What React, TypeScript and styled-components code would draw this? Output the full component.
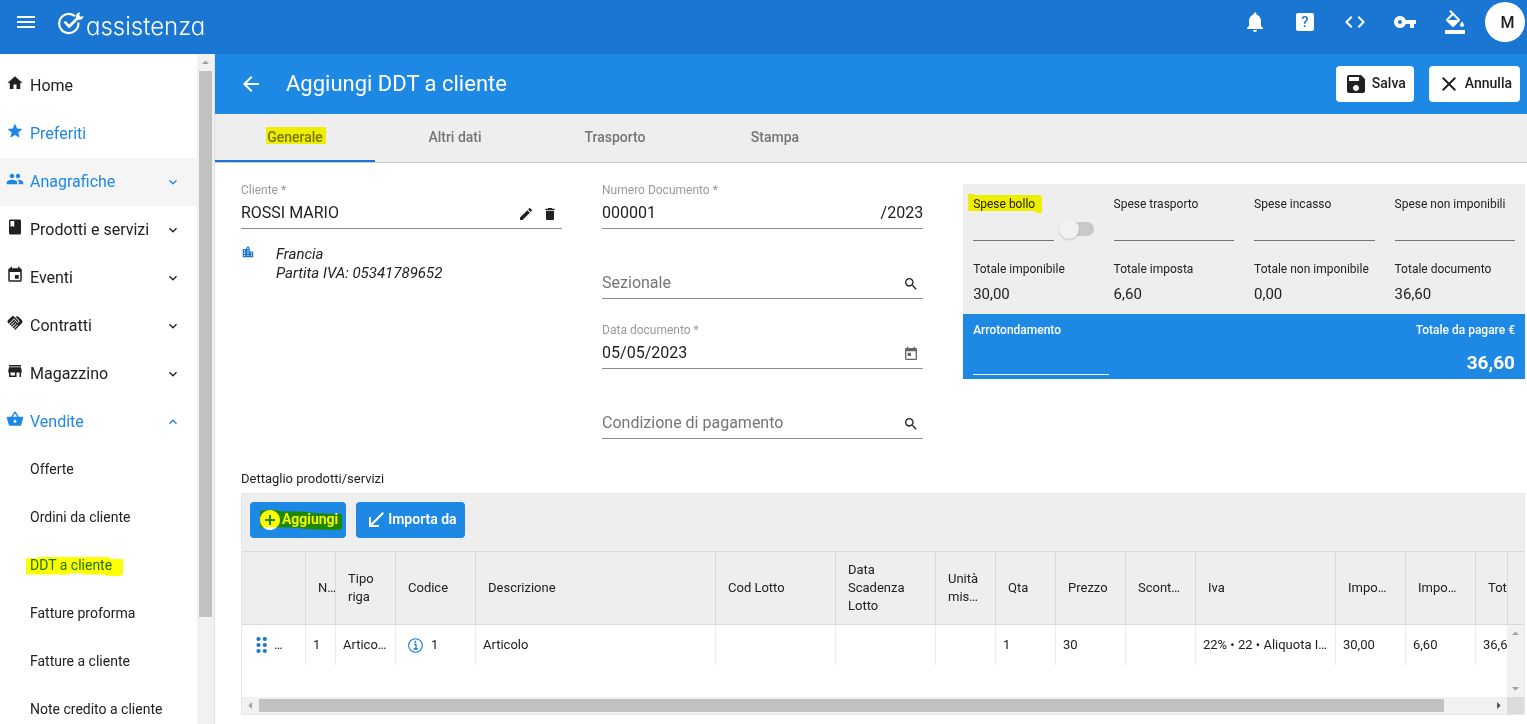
import React from "react";
import styled, { createGlobalStyle, css } from "styled-components";
import {
  MdAddCircle, MdArrowBack, MdArrowDropDown, MdArrowDropUp, MdArrowLeft, MdArrowRight,
  MdCallReceived, MdClass, MdClose, MdCode, MdDelete, MdEdit, MdEvent, MdFormatColorFill,
  MdHandshake, MdHome, MdKeyboardArrowDown, MdKeyboardArrowUp, MdLocationCity,
  MdMenu, MdNotifications, MdPeople, MdSave, MdSearch, MdShoppingBasket, MdStar, MdStore,
  MdToday, MdVpnKey,
} from "react-icons/md";

const color = {
  primary: "#1976d2",
  accent: "#1e88e5",
  panel: "#eeeeee",
  text: "#212121",
  muted: "#757575",
  line: "#d9d9d9",
  track: "#f1f1f1",
  thumb: "#c1c1c1",
};

const GlobalStyle = createGlobalStyle`
  *, *::before, *::after { box-sizing: border-box; }
  body {
    margin: 0;
    overflow: hidden;
    background: #fff;
    color: ${color.text};
    font-family: Roboto, "Liberation Sans", sans-serif;
    font-size: 13px;
  }
  button, input { font: inherit; color: inherit; }
  svg { display: block; flex: none; }
`;

const Page = styled.div`
  display: flex;
  flex-direction: column;
  height: 100vh;
`;

/* ---------- Top bar ---------- */

const TopBar = styled.header`
  display: flex;
  align-items: center;
  flex: none;
  height: 54px;
  padding: 0 2px 10px 14px;
  background: ${color.primary};
  color: #fff;
`;

const BareButton = styled.button`
  display: flex;
  align-items: center;
  justify-content: center;
  padding: 0;
  border: 0;
  background: none;
  cursor: pointer;
`;

const TopAction = styled(BareButton)`
  width: 50px;
  height: 44px;
`;

const Logo = styled.a`
  display: flex;
  align-items: center;
  gap: 1px;
  margin: 4px auto 0 20px;
  color: #fff;
  text-decoration: none;
`;

const LogoText = styled.span`
  padding-top: 6px;
  font-family: Inter, Lato, sans-serif;
  font-size: 24px;
  font-weight: 300;
  line-height: 26px;
  font-feature-settings: "cv11";
`;

const HelpBox = styled.span`
  width: 18px;
  border-radius: 2px;
  background: #fff;
  color: ${color.primary};
  font-size: 15px;
  font-weight: 500;
  line-height: 18px;
  text-align: center;
`;

const Avatar = styled(BareButton)`
  width: 40px;
  height: 40px;
  margin-left: 5px;
  padding-left: 5px;
  border-radius: 50%;
  background: #fff;
  color: ${color.text};
  font-size: 16px;
  font-weight: 500;
`;

/* ---------- Sidebar ---------- */

const Body = styled.div`
  display: flex;
  flex: 1;
  min-height: 0;
`;

const Sidebar = styled.aside`
  display: flex;
  flex: none;
  width: 215px;
  border-right: 1px solid #e0e0e0;
  overflow: hidden;
`;

const Nav = styled.nav`
  flex: 1;
  padding-top: 8px;
  overflow: hidden;
`;

const NavItem = styled.a<{ $tone?: "active" | "hover" }>`
  display: flex;
  align-items: center;
  gap: 6px;
  height: 48px;
  padding: 0 16px 2px 6px;
  background: ${(p) => (p.$tone === "hover" ? "#f5f5f5" : "transparent")};
  color: ${(p) => (p.$tone ? color.accent : color.text)};
  font-size: 16px;
  text-decoration: none;

  > svg:first-child { margin-bottom: 4px; }
  > svg:last-child:not(:first-child) { margin: 2px 0 0 auto; }
`;

const SubItem = styled.a`
  display: flex;
  align-items: center;
  height: 48px;
  padding: 0 16px 2px 30px;
  color: ${color.text};
  font-size: 14px;
  text-decoration: none;
`;

/* ---------- Drawn scrollbars ---------- */

const ScrollTrack = styled.div<{ $horizontal?: boolean }>`
  display: flex;
  flex-direction: ${(p) => (p.$horizontal ? "row" : "column")};
  align-items: center;
  flex: none;
  ${(p) => (p.$horizontal ? "height: 17px;" : "width: 17px;")}
  background: ${color.track};
  color: #a3a3a3;
`;

const ScrollRun = styled.div<{ $horizontal?: boolean }>`
  flex: 1;
  display: flex;
  flex-direction: ${(p) => (p.$horizontal ? "row" : "column")};
  align-items: center;
  align-self: stretch;
`;

const ScrollThumb = styled.div<{ $horizontal?: boolean; $share: string }>`
  background: ${color.thumb};
  ${(p) => (p.$horizontal ? css`height: 13px; width: ${p.$share};` : css`width: 13px; height: ${p.$share};`)}
`;

/* ---------- Highlighter strokes ---------- */

const Marked = styled.span`
  position: relative;
`;

const Stroke = styled.span<{ $inset: string; $shape?: string }>`
  position: absolute;
  inset: ${(p) => p.$inset};
  background: #ff0;
  mix-blend-mode: multiply;
  pointer-events: none;
  ${(p) => p.$shape && css`clip-path: polygon(${p.$shape});`}
`;

/* ---------- Main area ---------- */

const Main = styled.main`
  display: flex;
  flex-direction: column;
  flex: 1;
  min-width: 0;
`;

const TitleBar = styled.div`
  display: flex;
  align-items: center;
  flex: none;
  gap: 15px;
  height: 60px;
  padding: 0 7px 0 24px;
  background: ${color.accent};
  color: #fff;
`;

const Title = styled.h1`
  flex: 1;
  margin: 0 0 2px 8px;
  font-size: 22px;
  font-weight: 400;
`;

const ActionButton = styled.button<{ $filled?: boolean }>`
  position: relative;
  display: flex;
  align-items: center;
  gap: ${(p) => (p.$filled ? "0" : "4px")};
  height: 36px;
  padding: 0 8px;
  border: 0;
  border-radius: 4px;
  background: ${(p) => (p.$filled ? color.accent : "#fff")};
  color: ${(p) => (p.$filled ? "#fff" : color.text)};
  font-size: 14px;
  font-weight: ${(p) => (p.$filled ? 600 : 500)};
  cursor: pointer;

  > span { margin-bottom: 2px; }
`;

const Tabs = styled.div`
  display: flex;
  flex: none;
  height: 49px;
  border-bottom: 1px solid #cccccc;
  background: ${color.panel};
`;

const Tab = styled.button<{ $active?: boolean }>`
  width: 160px;
  padding: 0;
  border: 0;
  border-bottom: 2px solid ${(p) => (p.$active ? color.primary : "transparent")};
  background: none;
  color: ${color.muted};
  font-size: 14px;
  font-weight: 500;
`;

const Content = styled.div`
  display: flex;
  flex-direction: column;
  flex: 1;
  padding: 16px 2px 9px 26px;
`;

const FormGrid = styled.div`
  display: grid;
  grid-template-columns: 4fr 4fr 7fr;
  column-gap: 40px;
`;

const FieldColumn = styled.div`
  display: flex;
  flex-direction: column;
  gap: 20px;
  min-width: 0;
`;

const FieldBox = styled.div`
  display: flex;
  flex-direction: column;
  height: 50px;
  border-bottom: 1px solid #8c8c8c;
`;

const FieldLabel = styled.label`
  height: 22px;
  color: #9a9a9a;
  font-size: 12px;
  line-height: 22px;
`;

const FieldRow = styled.div`
  display: flex;
  align-items: center;
  gap: 8px;
  height: 22px;
  color: ${color.text};
  font-size: 16px;
`;

const FieldInput = styled.input`
  flex: 1;
  min-width: 0;
  padding: 2px 0 0;
  border: 0;
  outline: 0;
  background: none;
  font-size: 16px;
  line-height: 22px;

  &::placeholder { color: ${color.muted}; opacity: 1; }
`;

const FieldTools = styled.span`
  display: flex;
  gap: 8px;
  padding: 3px 4px 0 0;
`;

const CustomerInfo = styled.div`
  display: flex;
  gap: 21px;
  margin-top: -4px;
  font-size: 15px;
  font-style: italic;
  line-height: 19px;

  svg { color: ${color.primary}; }
`;

/* ---------- Totals ---------- */

const Totals = styled.section`
  align-self: start;
  margin-top: 5px;
  background: ${color.panel};
`;

const TotalsGrid = styled.div`
  display: grid;
  grid-template-columns: repeat(4, 1fr);
  grid-auto-rows: 65px;
`;

const TotalCell = styled.div`
  display: flex;
  flex-direction: column;
  padding: 10px 10px 8px;
  line-height: 20px;
  font-size: 12px;
`;

const TotalValue = styled.output`
  padding-top: 3px;
  font-size: 15px;
  line-height: 24px;
`;

const AmountRow = styled.div`
  display: flex;
  align-items: flex-start;
  gap: 6px;
`;

const AmountInput = styled.input<{ $light?: boolean }>`
  flex: none;
  width: 100%;
  min-width: 0;
  height: ${(p) => (p.$light ? "35px" : "27px")};
  padding: 0;
  border: 0;
  border-bottom: 1px solid ${(p) => (p.$light ? "#fff" : "#757575")};
  outline: 0;
  background: none;

  ${AmountRow} & { flex: 1; }
`;

const Switch = styled.input`
  appearance: none;
  position: relative;
  flex: none;
  width: 34px;
  height: 14px;
  margin: 8px 0 0;
  border-radius: 7px;
  background: #c9c9c9;

  &::before {
    content: "";
    position: absolute;
    top: -3px;
    left: -1px;
    width: 20px;
    height: 20px;
    border-radius: 50%;
    background: #f1f1f1;
    box-shadow: 0 1px 2px rgba(0, 0, 0, 0.2);
  }
`;

const PayRow = styled.div`
  display: flex;
  justify-content: space-between;
  height: 65px;
  padding: 6px 10px 4px;
  background: ${color.accent};
  color: #fff;
  font-size: 12px;
  font-weight: 500;
  line-height: 20px;
`;

const PayCell = styled.div<{ $end?: boolean }>`
  display: flex;
  flex-direction: column;
  width: 25%;
  text-align: ${(p) => (p.$end ? "right" : "left")};
`;

const PayTotal = styled.output`
  padding-top: 10px;
  font-size: 19px;
  font-weight: 700;
  line-height: 26px;
`;

/* ---------- Detail grid ---------- */

const SectionLabel = styled.h2`
  margin: 29px 0 3px;
  font-size: 13px;
  font-weight: 400;
  line-height: 22px;
`;

const Grid = styled.section`
  display: flex;
  flex-direction: column;
  flex: 1;
  min-height: 0;
  border: 1px solid #e6e6e6;
`;

const Toolbar = styled.div`
  display: flex;
  gap: 10px;
  flex: none;
  height: 57px;
  padding: 8px;
  background: ${color.panel};
`;

const GridBody = styled.div`
  display: flex;
  flex: 1;
  min-height: 0;
`;

const GridView = styled.div`
  flex: 1;
  min-width: 0;
  overflow: hidden;
`;

const Gutter = styled.div`
  display: flex;
  flex-direction: column;
  width: 17px;
`;

const GutterHead = styled.div`
  flex: none;
  height: 74px;
  border: solid ${color.line};
  border-width: 1px 0 1px 1px;
  background: ${color.panel};
`;

const GutterTrack = styled(ScrollTrack)`
  flex: 1;
  justify-content: space-between;
`;

const Table = styled.table`
  width: 1313px;
  table-layout: fixed;
  border-spacing: 0;
  font-size: 13px;
  line-height: 18px;
`;

const HeadCell = styled.th`
  height: 74px;
  padding: 0 0 0 12px;
  border: solid ${color.line};
  border-width: 1px 0 1px 1px;
  background: ${color.panel};
  font-weight: 400;
  text-align: left;
  white-space: pre-line;
  overflow: hidden;

  &:first-child { border-left: 0; }
`;

const Cell = styled.td`
  height: 40px;
  padding: 0 0 0 7px;
  border-left: 1px solid #ebebeb;
  white-space: nowrap;
  overflow: hidden;

  &:first-child { border-left: 0; padding-left: 14px; }
`;

const IconCell = styled.span<{ $indent?: boolean }>`
  display: flex;
  align-items: center;
  gap: ${(p) => (p.$indent ? "8px" : "6px")};
  padding-left: ${(p) => (p.$indent ? "5px" : "0")};

  svg { color: ${color.primary}; }
`;

const Corner = styled.div`
  width: 17px;
  height: 17px;
  background: #dcdcdc;
`;

const DarkArrow = styled.span`
  color: #505050;
`;

/* ---------- Data ---------- */

const menu = [
  { label: "Home", icon: MdHome },
  { label: "Preferiti", icon: MdStar, tone: "active" as const },
  { label: "Anagrafiche", icon: MdPeople, tone: "hover" as const, arrow: "down" },
  { label: "Prodotti e servizi", icon: MdClass, arrow: "down" },
  { label: "Eventi", icon: MdEvent, arrow: "down" },
  { label: "Contratti", icon: MdHandshake, arrow: "down" },
  { label: "Magazzino", icon: MdStore, arrow: "down" },
  { label: "Vendite", icon: MdShoppingBasket, tone: "active" as const, arrow: "up" },
];

const subMenu = ["Offerte", "Ordini da cliente", "DDT a cliente", "Fatture proforma", "Fatture a cliente", "Note credito a cliente"];

const InfoIcon = () => (
  <svg width="15" height="15" viewBox="0 0 15 15" fill="none" stroke="currentColor" aria-hidden="true">
    <circle cx="7.5" cy="7.5" r="6.8" strokeWidth="1.1" />
    <path d="M6 6.4h2v4.6M5.6 11h4.2" strokeWidth="1.3" />
    <circle cx="7.4" cy="4" r="1" fill="currentColor" stroke="none" />
  </svg>
);

const InfoCell = ({ text }: { text: string }) => (
  <IconCell $indent><InfoIcon /><span>{text}</span></IconCell>
);

const DragDots = () => (
  <svg width="12" height="18" viewBox="0 0 12 18" fill="currentColor" aria-hidden="true">
    {[3, 9, 15].map((y) => (
      <g key={y}>
        <circle cx="2.5" cy={y} r="2.1" />
        <circle cx="8.8" cy={y} r="2.1" />
      </g>
    ))}
  </svg>
);

const columns: { title: string; width: number; value?: React.ReactNode }[] = [
  { title: "", width: 63, value: <IconCell><DragDots /><span>…</span></IconCell> },
  { title: "N…", width: 30, value: "1" },
  { title: "Tipo\nriga", width: 60, value: "Artico…" },
  { title: "Codice", width: 80, value: <InfoCell text="1" /> },
  { title: "Descrizione", width: 240, value: "Articolo" },
  { title: "Cod Lotto", width: 120 },
  { title: "Data\nScadenza\nLotto", width: 100 },
  { title: "Unità\nmis…", width: 60 },
  { title: "Qta", width: 60, value: "1" },
  { title: "Prezzo", width: 70, value: "30" },
  { title: "Scont…", width: 70 },
  { title: "Iva", width: 140, value: "22% • 22 • Aliquota I…" },
  { title: "Impo…", width: 70, value: "30,00" },
  { title: "Impo…", width: 70, value: "6,60" },
  { title: "Totale", width: 80, value: "36,60" },
];

/* ---------- Pieces ---------- */

const LogoMark = () => (
  <svg width="27" height="24" viewBox="0 0 27 24" fill="none" stroke="#fff" aria-hidden="true">
    <path d="M16.3 3.6A9.6 9.6 0 1 0 20.4 11.4" strokeWidth="2.2" strokeLinecap="round" />
    <path d="M6.6 9.6l4.6 4.8L20.8 5" strokeWidth="2.8" />
    <path d="M22 0.6a3.6 3.6 0 0 0-3.8 4.8l2.3 2.2a3.6 3.6 0 0 0 4.9-3.8l-2.2 1.3-2-1.9z" fill="#fff" stroke="none" />
  </svg>
);

interface FieldProps {
  id: string;
  label: string;
  value?: string;
  floating?: boolean;
  suffix?: string;
  children?: React.ReactNode;
}

const Field = ({ id, label, value, floating, suffix, children }: FieldProps) => (
  <FieldBox>
    <FieldLabel htmlFor={id}>{floating ? label : ""}</FieldLabel>
    <FieldRow>
      <FieldInput
        id={id}
        defaultValue={value}
        placeholder={floating ? undefined : label}
        aria-label={floating ? undefined : label}
      />
      {suffix && <span>{suffix}</span>}
      {children && <FieldTools>{children}</FieldTools>}
    </FieldRow>
  </FieldBox>
);

const Amount = ({ id, label }: { id: string; label: string }) => (
  <TotalCell>
    <label htmlFor={id}>{label}</label>
    <AmountInput id={id} />
  </TotalCell>
);

const Total = ({ label, value }: { label: string; value: string }) => (
  <TotalCell>
    <span>{label}</span>
    <TotalValue>{value}</TotalValue>
  </TotalCell>
);

export default function App() {
  return (
    <Page>
      <GlobalStyle />
      <TopBar>
        <BareButton aria-label="Menu"><MdMenu size={24} /></BareButton>
        <Logo href="#">
          <LogoMark />
          <LogoText>assistenza</LogoText>
        </Logo>
        <TopAction aria-label="Notifiche"><MdNotifications size={24} /></TopAction>
        <TopAction aria-label="Aiuto"><HelpBox>?</HelpBox></TopAction>
        <TopAction aria-label="Codice"><MdCode size={24} /></TopAction>
        <TopAction aria-label="Accesso"><MdVpnKey size={24} /></TopAction>
        <TopAction aria-label="Tema"><MdFormatColorFill size={24} /></TopAction>
        <Avatar>M</Avatar>
      </TopBar>

      <Body>
        <Sidebar>
          <Nav>
            {menu.map(({ label, icon: Icon, tone, arrow }) => (
              <NavItem key={label} href="#" $tone={tone}>
                <Icon size={18} />
                <span>{label}</span>
                {arrow === "down" && <MdKeyboardArrowDown size={16} />}
                {arrow === "up" && <MdKeyboardArrowUp size={16} />}
              </NavItem>
            ))}
            {subMenu.map((label) => (
              <SubItem key={label} href="#">
                {label === "DDT a cliente" ? (
                  <Marked style={{ color: color.primary }}>
                    {label}
                    <Stroke
                      $inset="0 -11px -3px -4px"
                      $shape="0 6%, 12% 6%, 12% 0, 86% 0, 86% 10%, 100% 10%, 100% 94%, 98% 94%, 98% 100%, 82% 100%, 82% 92%, 58% 92%, 58% 86%, 45% 86%, 45% 92%, 0 92%"
                    />
                  </Marked>
                ) : label}
              </SubItem>
            ))}
          </Nav>
          <ScrollTrack aria-hidden="true">
            <MdArrowDropUp size={17} />
            <ScrollRun><ScrollThumb $share="83.6%" /></ScrollRun>
          </ScrollTrack>
        </Sidebar>

        <Main>
          <TitleBar>
            <BareButton aria-label="Indietro"><MdArrowBack size={24} /></BareButton>
            <Title>Aggiungi DDT a cliente</Title>
            <ActionButton><MdSave size={24} /><span>Salva</span></ActionButton>
            <ActionButton><MdClose size={24} /><span>Annulla</span></ActionButton>
          </TitleBar>

          <Tabs role="tablist">
            <Tab role="tab" aria-selected $active>
              <Marked>Generale<Stroke $inset="-2px -3px 1px -1px" /></Marked>
            </Tab>
            <Tab role="tab">Altri dati</Tab>
            <Tab role="tab">Trasporto</Tab>
            <Tab role="tab">Stampa</Tab>
          </Tabs>

          <Content>
            <FormGrid>
              <FieldColumn>
                <Field id="cliente" label="Cliente *" value="ROSSI MARIO" floating>
                  <BareButton aria-label="Modifica"><MdEdit size={16} /></BareButton>
                  <BareButton aria-label="Elimina"><MdDelete size={16} /></BareButton>
                </Field>
                <CustomerInfo>
                  <MdLocationCity size={14} />
                  <div>Francia<br />Partita IVA: 05341789652</div>
                </CustomerInfo>
              </FieldColumn>

              <FieldColumn>
                <Field id="numero" label="Numero Documento *" value="000001" suffix="/2023" floating />
                <Field id="sezionale" label="Sezionale">
                  <BareButton aria-label="Cerca sezionale"><MdSearch size={16} /></BareButton>
                </Field>
                <Field id="data" label="Data documento *" value="05/05/2023" floating>
                  <BareButton aria-label="Calendario"><MdToday size={16} color="#666" /></BareButton>
                </Field>
                <Field id="pagamento" label="Condizione di pagamento">
                  <BareButton aria-label="Cerca condizione"><MdSearch size={16} /></BareButton>
                </Field>
              </FieldColumn>

              <Totals>
                <TotalsGrid>
                  <TotalCell>
                    <label htmlFor="bollo">
                      <Marked>
                        Spese bollo
                        <Stroke
                          $inset="-3px -7px -2px -5px"
                          $shape="0 0, 8% 0, 8% 5%, 96% 5%, 100% 14%, 100% 100%, 91% 100%, 91% 90%, 0 90%"
                        />
                      </Marked>
                    </label>
                    <AmountRow>
                      <AmountInput id="bollo" />
                      <Switch type="checkbox" role="switch" aria-label="Applica bollo" />
                    </AmountRow>
                  </TotalCell>
                  <Amount id="trasporto" label="Spese trasporto" />
                  <Amount id="incasso" label="Spese incasso" />
                  <Amount id="nonimponibili" label="Spese non imponibili" />
                  <Total label="Totale imponibile" value="30,00" />
                  <Total label="Totale imposta" value="6,60" />
                  <Total label="Totale non imponibile" value="0,00" />
                  <Total label="Totale documento" value="36,60" />
                </TotalsGrid>
                <PayRow>
                  <PayCell>
                    <label htmlFor="arrotondamento">Arrotondamento</label>
                    <AmountInput id="arrotondamento" $light />
                  </PayCell>
                  <PayCell $end>
                    <span>Totale da pagare €</span>
                    <PayTotal>36,60</PayTotal>
                  </PayCell>
                </PayRow>
              </Totals>
            </FormGrid>

            <SectionLabel>Dettaglio prodotti/servizi</SectionLabel>
            <Grid>
              <Toolbar>
                <ActionButton $filled>
                  <MdAddCircle size={24} />
                  <span>Aggiungi</span>
                  <Stroke
                    $inset="8px 4px 6px 10px"
                    $shape="0 5%, 8% 0, 20% 0, 26% 8%, 50% 8%, 68% 16%, 100% 20%, 100% 96%, 88% 100%, 60% 96%, 40% 88%, 0 86%"
                  />
                </ActionButton>
                <ActionButton $filled><MdCallReceived size={24} /><span>Importa da</span></ActionButton>
              </Toolbar>
              <GridBody>
                <GridView>
                  <Table>
                    <colgroup>
                      {columns.map((c, i) => <col key={i} style={{ width: c.width }} />)}
                    </colgroup>
                    <thead>
                      <tr>{columns.map((c, i) => <HeadCell key={i} scope="col">{c.title}</HeadCell>)}</tr>
                    </thead>
                    <tbody>
                      <tr>{columns.map((c, i) => <Cell key={i}>{c.value}</Cell>)}</tr>
                    </tbody>
                  </Table>
                </GridView>
                <Gutter aria-hidden="true">
                  <GutterHead />
                  <GutterTrack>
                    <MdArrowDropUp size={17} />
                    <MdArrowDropDown size={17} />
                  </GutterTrack>
                </Gutter>
              </GridBody>
              <ScrollTrack $horizontal aria-hidden="true">
                <MdArrowLeft size={17} />
                <ScrollRun $horizontal><ScrollThumb $horizontal $share="96.3%" /></ScrollRun>
                <DarkArrow><MdArrowRight size={17} /></DarkArrow>
                <Corner />
              </ScrollTrack>
            </Grid>
          </Content>
        </Main>
      </Body>
    </Page>
  );
}
